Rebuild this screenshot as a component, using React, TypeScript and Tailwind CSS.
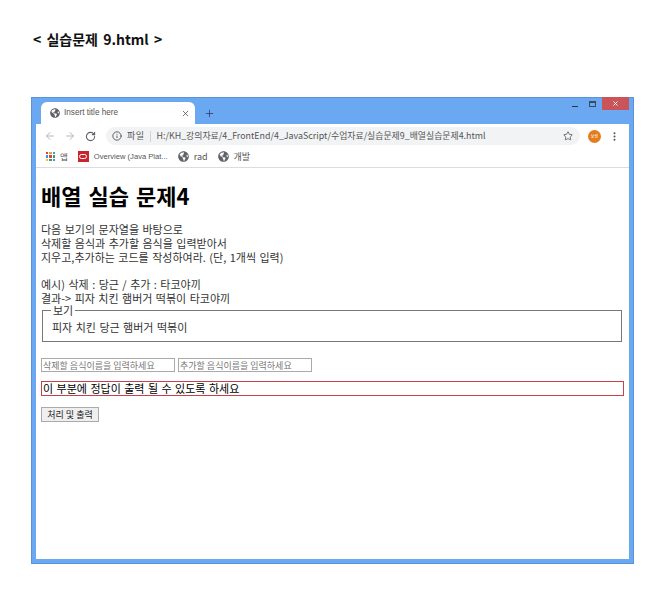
import { ArrowLeft, ArrowRight, RotateCw, Info, Star, X, Plus, MoreVertical } from "lucide-react"
import { FaGlobeAmericas } from "react-icons/fa"

const KR = "font-['Noto_Sans_CJK_KR','Noto_Sans',sans-serif]"
const APP_DOTS = ["#d9453b", "#e8a33d", "#4a8fe0", "#4a8fe0", "#d9453b", "#3f9e5a", "#e8c23d", "#3f9e5a", "#4a8fe0"]

function Bookmark({ label }: { label: string }) {
  return (
    <div className="flex items-center gap-[5px]">
      <FaGlobeAmericas size={11} className="text-[#5f6368]" />
      <span className="text-[9px] text-[#555]">{label}</span>
    </div>
  )
}

function BrowserChrome() {
  return (
    <>
      {/* tab strip */}
      <div className="relative flex h-[22px] items-end bg-[#6aa9f2]">
        <div className="ml-[5px] flex h-[22px] w-[154px] items-center rounded-t-[6px] bg-white pl-[9px] pr-[5px]">
          <FaGlobeAmericas size={10} className="text-[#5f6368]" />
          <span className="ml-[4px] flex-1 font-['Liberation_Sans',sans-serif] text-[8.2px] text-[#555]">Insert title here</span>
          <X size={9} strokeWidth={2} className="text-[#444]" />
        </div>
        <Plus size={11} strokeWidth={1.6} className="mb-[5px] ml-[9px] text-[#3a2a6a]" />
        <div className="absolute right-0 top-[-5px] flex items-start">
          <div className="mt-[9px] h-[1px] w-[6px] bg-[#333]" />
          <div className="ml-[11px] mt-[4px] h-[6px] w-[7px] border border-t-2 border-[#3a4a66]" />
          <div className="ml-[6px] flex h-[13px] w-[27px] items-center justify-center bg-[#c9545a]">
            <X size={7} strokeWidth={3} className="text-white" />
          </div>
        </div>
      </div>

      {/* toolbar */}
      <div className="flex h-[24px] items-center bg-white pl-[8px]">
        <ArrowLeft size={12} className="text-[#b5b8bc]" />
        <ArrowRight size={12} className="ml-[8px] text-[#b5b8bc]" />
        <RotateCw size={11} strokeWidth={2.4} className="ml-[9px] text-[#5f6368]" />
        <div className="ml-[10px] flex h-[18px] w-[474px] shrink-0 items-center rounded-full bg-[#f1f3f4] pl-[6px] pr-[7px]">
          <Info size={10} strokeWidth={2.2} className="text-[#555]" />
          <span className={`ml-[5px] text-[9px] text-[#555] [letter-spacing:0.5px] ${KR}`}>파일</span>
          <div className="ml-[5px] h-[11px] w-px bg-[#d0d2d4]" />
          <span className={`ml-[6px] flex-1 whitespace-nowrap text-[8.9px] text-[#555] ${KR}`}>
            H:/KH_강의자료/4_FrontEnd/4_JavaScript/수업자료/실습문제9_배열실습문제4.html
          </span>
          <Star size={10} strokeWidth={1.8} className="text-[#444]" />
        </div>
        <div className={`ml-[8px] flex h-[13px] w-[13px] items-center justify-center rounded-full bg-[#e57c1c] text-[4px] text-white ${KR}`}>
          보람
        </div>
        <MoreVertical size={11} strokeWidth={2.4} className="ml-[8px] text-[#555]" />
      </div>

      {/* bookmarks */}
      <div className="flex h-[20px] items-center border-b border-[#dcdcdc] bg-white pb-[2px] pl-[10px]">
        <div className="grid h-[9px] w-[9px] grid-cols-3 gap-px">
          {APP_DOTS.map((c, i) => (
            <div key={i} style={{ backgroundColor: c }} />
          ))}
        </div>
        <span className={`ml-[5px] text-[8.5px] text-[#555] ${KR}`}>앱</span>
        <div className="ml-[10px] flex h-[11px] w-[11px] items-center justify-center bg-[#c8252f]">
          <div className="h-[5px] w-[8px] rounded-full border border-white" />
        </div>
        <span className="ml-[5px] font-['Liberation_Sans',sans-serif] text-[7.6px] text-[#555]">Overview (Java Plat...</span>
        <div className={`ml-[10px] flex items-center gap-[10px] ${KR}`}>
          <Bookmark label="rad" />
          <Bookmark label="개발" />
        </div>
      </div>
    </>
  )
}

function PageBody() {
  return (
    <div className={`px-[5px] text-[#333] ${KR}`}>
      <h1 className="mt-[13px] text-[22px] font-bold leading-[28px] text-black [word-spacing:2px]">배열 실습 문제4</h1>

      <div className="mt-[13px] text-[11px] leading-[14px] [word-spacing:1px]">
        <p>다음 보기의 문자열을 바탕으로</p>
        <p>삭제할 음식과 추가할 음식을 입력받아서</p>
        <p>지우고,추가하는 코드를 작성하여라. (단, 1개씩 입력)</p>
        <p className="mt-[13px]">예시) 삭제 : 당근 / 추가 : 타코야끼</p>
        <p>결과-&gt; 피자 치킨 햄버거 떡볶이 타코야끼</p>
      </div>

      <fieldset className="ml-px mr-[2px] h-[37px] border border-[#777] pl-[9px]">
        <legend className="ml-[-1px] px-[2px] text-[11px] leading-[10px]">보기</legend>
        <p className="mt-[5px] text-[11px] leading-[14px] [word-spacing:1px]">피자 치킨 당근 햄버거 떡볶이</p>
      </fieldset>

      <div className="mt-[16px] flex gap-[3px]">
        <input
          placeholder="삭제할 음식이름을 입력하세요"
          className="h-[14px] w-[134px] border border-[#aaa] px-px text-[9px] placeholder:text-[#777]"
        />
        <input
          placeholder="추가할 음식이름을 입력하세요"
          className="h-[14px] w-[134px] border border-[#aaa] px-px text-[9px] placeholder:text-[#777]"
        />
      </div>

      <div className="mt-[9px] flex h-[15px] items-center border border-solid border-[#c8404c] px-px text-[11px] text-black [word-spacing:1px]">
        이 부분에 정답이 출력 될 수 있도록 하세요
      </div>

      <button className="mt-[11px] flex h-[15px] w-[58px] items-center justify-center border border-[#aaa] bg-[#efefef] text-[9px] text-[#222]">
        처리 및 출력
      </button>
    </div>
  )
}

export default function App() {
  return (
    <div className="h-[602px] w-[672px] overflow-hidden bg-white pl-[31px] pt-[31px]">
      <h2 className={`ml-[2px] h-[66px] text-[14px] font-bold leading-[16px] text-[#111] [word-spacing:2px] ${KR}`}>
        &lt; 실습문제 9.html &gt;
      </h2>
      <div className="flex h-[467px] w-[603px] flex-col border-[5px] border-[#6aa9f2] outline outline-[#5b94d6] outline-offset-[-1px]">
        <BrowserChrome />
        <div className="flex-1 bg-white">
          <PageBody />
        </div>
      </div>
    </div>
  )
}
